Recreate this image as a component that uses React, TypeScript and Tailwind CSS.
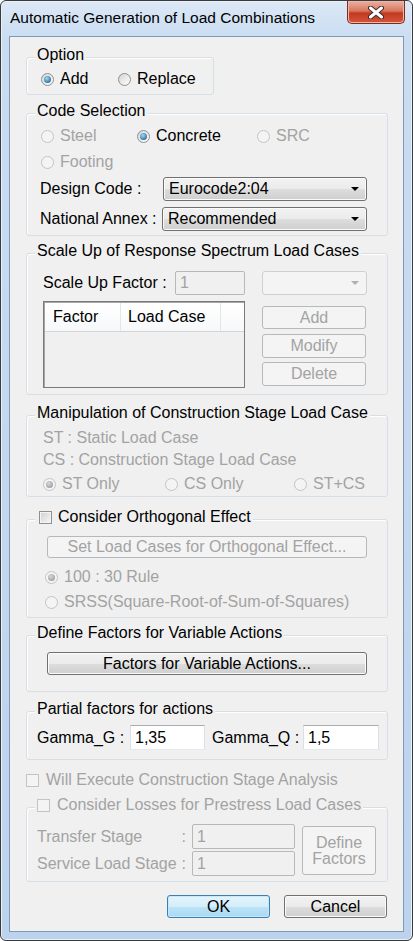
import clsx from 'clsx';
import type { ReactNode } from 'react';

// 無効状態の文字色（Win7 のダイアログ風）
const GRAY = 'text-[#a3a3a3]';
const FACE =
  'rounded-[3px] border border-[#707070] bg-[linear-gradient(#f2f2f2_0%,#ebebeb_50%,#dddddd_51%,#cfcfcf_100%)] shadow-[inset_0_0_0_1px_#fbfbfb]';
const BTN = clsx('flex items-center justify-center', FACE);
const COMBO = clsx('flex items-center justify-between pl-[5px]', FACE);
const BTN_OFF =
  'flex items-center justify-center rounded-[3px] border border-[#b5b9bc] bg-[#f4f4f4] text-[#a3a3a3]';
const INPUT_OFF = 'flex items-center rounded-[2px] border border-[#b8b8b8] bg-[#f0f0f0] pl-[4px] text-[#a3a3a3]';
const INPUT =
  'flex items-center border border-[#abadb3] border-x-[#dbdfe6] border-b-[#e3e9ef] bg-white pl-[4px]';

function Radio({ on, dis }: { on?: boolean; dis?: boolean }) {
  return (
    <span
      className={clsx(
        'flex h-[13px] w-[13px] shrink-0 items-center justify-center rounded-full border',
        dis
          ? 'border-[#c4c4c4] bg-[#f4f4f4]'
          : 'border-[#8e8f8f] bg-[linear-gradient(135deg,#d4d4d4,#ffffff)]'
      )}
    >
      {on && (
        <span
          className={clsx(
            'h-[7px] w-[7px] rounded-full',
            dis
              ? 'bg-[radial-gradient(circle_at_40%_35%,#d8d8d8,#8f8f8f)]'
              : 'bg-[radial-gradient(circle_at_40%_35%,#9fd8f5,#0b4f85)]'
          )}
        />
      )}
    </span>
  );
}

function Check({ dis }: { dis?: boolean }) {
  return (
    <span
      className={clsx(
        'block h-[13px] w-[13px] shrink-0 border',
        dis
          ? 'border-[#c4c4c4] bg-[#f4f4f4]'
          : 'border-[#8e8f8f] bg-[linear-gradient(135deg,#cfcfcf,#f7f7f7)] shadow-[inset_0_0_0_1px_#f4f4f4]'
      )}
    />
  );
}

function Opt({ on, dis, w, children }: { on?: boolean; dis?: boolean; w?: string; children: ReactNode }) {
  return (
    <div className={clsx('flex h-[18px] items-center gap-[6px]', w, dis && GRAY)}>
      <Radio on={on} dis={dis} />
      <span>{children}</span>
    </div>
  );
}

function Arrow({ dis }: { dis?: boolean }) {
  return (
    <svg width="8" height="4" viewBox="0 0 8 4" className="mr-[7px] shrink-0">
      <path d="M0 0h8L4 4z" fill={dis ? '#b0b0b0' : '#000'} />
    </svg>
  );
}

function Group({
  legend,
  className,
  children,
}: {
  legend: ReactNode;
  className?: string;
  children: ReactNode;
}) {
  return (
    <div
      className={clsx(
        'flex flex-col rounded-[3px] border border-[#d5dfe5] shadow-[inset_1px_1px_0_#ffffff]',
        className
      )}
    >
      <div className="mt-[-12px] ml-[8px] flex h-[18px] w-fit items-center bg-[#f0f0f0] px-[2px]">{legend}</div>
      {children}
    </div>
  );
}

export default function App() {
  return (
    <div
      className="flex h-[941px] w-[413px] flex-col overflow-hidden rounded-[6px] border border-[#3b3b3b] bg-[linear-gradient(#dce8f6_0px,#c9dcf2_40px,#bcd3ee_100%)] shadow-[inset_0_0_0_1px_#e8f0fa] text-black"
      style={{ fontFamily: '"Liberation Sans", Arial, sans-serif' }}
    >
      {/* タイトルバー */}
      <div className="flex h-[35px] shrink-0 items-start justify-between">
        <div className="pt-[8px] pl-[9px] text-[15.5px] leading-[18px] text-black">
          Automatic Generation of Load Combinations
        </div>
        <div className="mr-[7px] flex h-[23px] w-[58px] items-center justify-center rounded-b-[5px] border border-t-0 border-[#7d2a1f] bg-[linear-gradient(#eab0a3_0%,#d9775f_45%,#c3391f_55%,#d2583c_100%)] shadow-[inset_0_0_0_1px_#f0b6a8]">
          <svg width="16" height="13" viewBox="0 0 16 13">
            <path d="M2.5 2L13.5 11M13.5 2L2.5 11" stroke="#3f2a28" strokeWidth="5" strokeLinecap="round" />
            <path d="M2.5 2L13.5 11M13.5 2L2.5 11" stroke="#ffffff" strokeWidth="3" strokeLinecap="round" />
          </svg>
        </div>
      </div>

      {/* クライアント領域 */}
      <div className="mx-[8px] flex h-[896px] flex-col border border-[#8398b2] bg-[#f0f0f0] pl-[16px] pr-[15px] text-[16px] leading-[18px]">
        <Group legend="Option" className="mt-[20px] h-[38px] w-[188px]">
          <div className="mt-[6px] ml-[14px] flex">
            <Opt on w="w-[77px]">Add</Opt>
            <Opt>Replace</Opt>
          </div>
        </Group>

        <Group legend="Code Selection" className="mt-[18px] h-[123px]">
          <div className="mt-[7px] ml-[14px] flex">
            <Opt dis w="w-[96px]">Steel</Opt>
            <Opt on w="w-[120px]">Concrete</Opt>
            <Opt dis>SRC</Opt>
          </div>
          <div className="mt-[8px] ml-[14px] flex">
            <Opt dis>Footing</Opt>
          </div>
          <div className="mt-[6px] ml-[13px] flex items-center">
            <span className="w-[123px]">Design Code :</span>
            <div className={clsx(COMBO, 'h-[24px] w-[204px]')}>
              <span>Eurocode2:04</span>
              <Arrow />
            </div>
          </div>
          <div className="mt-[6px] ml-[13px] flex items-center">
            <span className="w-[122px]">National Annex :</span>
            <div className={clsx(COMBO, 'h-[24px] w-[205px]')}>
              <span>Recommended</span>
              <Arrow />
            </div>
          </div>
        </Group>

        <Group legend="Scale Up of Response Spectrum Load Cases" className="mt-[17px] h-[142px]">
          <div className="mt-[11px] ml-[16px] flex items-center">
            <span className="w-[132px]">Scale Up Factor :</span>
            <div className={clsx(INPUT_OFF, 'h-[24px] w-[70px]')}>1</div>
            <div className="ml-[17px] flex h-[24px] w-[105px] items-center justify-end rounded-[3px] border border-[#d0d0d0] bg-[#f4f4f4]">
              <Arrow dis />
            </div>
          </div>
          <div className="mt-[6px] ml-[16px] flex">
            <div className="flex h-[87px] w-[202px] flex-col border border-[#7a7a7a] bg-[#f0f0f0] shadow-[inset_1px_1px_0_#a5a5a5]">
              <div className="ml-[1px] mt-[1px] flex h-[29px] border-b border-[#d5d5d5] bg-[linear-gradient(#ffffff,#f7f8fa)]">
                <div className="flex w-[76px] items-center border-r border-[#e3e5e7] pl-[8px]">Factor</div>
                <div className="flex w-[100px] items-center border-r border-[#e3e5e7] pl-[7px]">Load Case</div>
              </div>
            </div>
            <div className="ml-[17px] flex w-[104px] flex-col">
              <div className={clsx(BTN_OFF, 'mt-[5px] h-[23px]')}>Add</div>
              <div className={clsx(BTN_OFF, 'mt-[5px] h-[24px]')}>Modify</div>
              <div className={clsx(BTN_OFF, 'mt-[4px] h-[24px]')}>Delete</div>
            </div>
          </div>
        </Group>

        <Group legend="Manipulation of Construction Stage Load Case" className="mt-[20px] h-[82px]">
          <div className={clsx('mt-[7px] ml-[16px] h-[18px]', GRAY)}>ST : Static Load Case</div>
          <div className={clsx('mt-[4px] ml-[16px] h-[18px]', GRAY)}>CS : Construction Stage Load Case</div>
          <div className="mt-[6px] ml-[16px] flex">
            <Opt on dis w="w-[122px]">ST Only</Opt>
            <Opt dis w="w-[129px]">CS Only</Opt>
            <Opt dis>ST+CS</Opt>
          </div>
        </Group>

        <Group
          legend={
            <div className="flex items-center gap-[6px] pl-[2px]">
              <Check />
              <span>Consider Orthogonal Effect</span>
            </div>
          }
          className="mt-[22px] h-[99px]"
        >
          <div className={clsx(BTN_OFF, 'mt-[10px] ml-[20px] h-[22px] w-[320px]')}>
            Set Load Cases for Orthogonal Effect...
          </div>
          <div className="mt-[10px] ml-[18px]">
            <Opt on dis>100 : 30 Rule</Opt>
          </div>
          <div className="mt-[7px] ml-[18px]">
            <Opt dis>SRSS(Square-Root-of-Sum-of-Squares)</Opt>
          </div>
        </Group>

        <Group legend="Define Factors for Variable Actions" className="mt-[17px] h-[57px]">
          <div className={clsx(BTN, 'mt-[10px] ml-[20px] h-[23px] w-[320px]')}>Factors for Variable Actions...</div>
        </Group>

        <Group legend="Partial factors for actions" className="mt-[19px] h-[49px]">
          <div className="mt-[7px] ml-[10px] flex items-center">
            <span className="w-[93px]">Gamma_G :</span>
            <div className={clsx(INPUT, 'h-[25px] w-[75px]')}>1,35</div>
            <span className="ml-[7px] w-[91px]">Gamma_Q :</span>
            <div className={clsx(INPUT, 'h-[25px] w-[76px]')}>1,5</div>
          </div>
        </Group>

        <div className={clsx('mt-[11px] flex h-[18px] items-center gap-[7px]', GRAY)}>
          <Check dis />
          <span>Will Execute Construction Stage Analysis</span>
        </div>

        <Group
          legend={
            <div className={clsx('flex items-center gap-[7px]', GRAY)}>
              <Check dis />
              <span>Consider Losses for Prestress Load Cases</span>
            </div>
          }
          className="mt-[18px] h-[75px]"
        >
          <div className="mt-[10px] ml-[10px] flex">
            <div className="flex flex-col">
              <div className="flex items-center">
                <span className={clsx('flex w-[155px] justify-between pr-[6px]', GRAY)}>
                  <span>Transfer Stage</span>
                  <span>:</span>
                </span>
                <div className={clsx(INPUT_OFF, 'h-[25px] w-[103px]')}>1</div>
              </div>
              <div className="mt-[2px] flex items-center">
                <span className={clsx('flex w-[155px] justify-between pr-[6px]', GRAY)}>
                  <span>Service Load Stage</span>
                  <span>:</span>
                </span>
                <div className={clsx(INPUT_OFF, 'h-[25px] w-[103px]')}>1</div>
              </div>
            </div>
            <div className={clsx(BTN_OFF, 'mt-[2px] ml-[7px] h-[49px] w-[74px] flex-col leading-[16px]')}>
              <span>Define</span>
              <span>Factors</span>
            </div>
          </div>
        </Group>

        <div className="mt-[13px] flex justify-end gap-[14px] pr-[1px]">
          <div className="flex h-[23px] w-[103px] items-center justify-center rounded-[3px] border border-[#3c7fb1] bg-[linear-gradient(#e5f4fc_0%,#d4eefb_50%,#bde4f8_51%,#aad8f2_100%)] shadow-[inset_0_0_0_1px_#c4eafc]">
            OK
          </div>
          <div className={clsx(BTN, 'h-[23px] w-[103px]')}>Cancel</div>
        </div>
      </div>
    </div>
  );
}
